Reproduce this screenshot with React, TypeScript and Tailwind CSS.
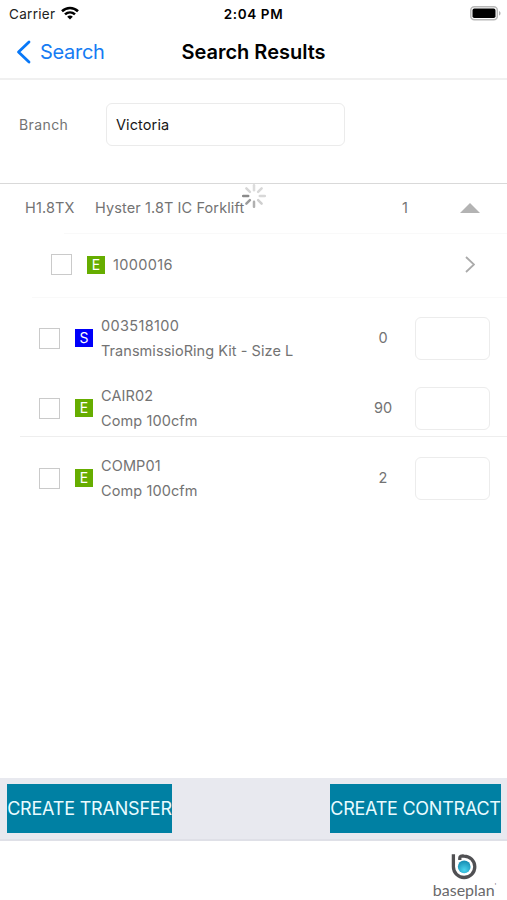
import React from "react";

type Kind = "E" | "S";

function Badge({ kind }: { kind: Kind }) {
  return (
    <span
      className={`flex h-[18px] w-[18px] shrink-0 items-center justify-center text-[14px] leading-none text-white ${
        kind === "E" ? "bg-[#66ad00]" : "bg-[#0000fa]"
      }`}
    >
      {kind}
    </span>
  );
}

function Checkbox() {
  return (
    <span
      role="checkbox"
      aria-checked="false"
      className="h-[21px] w-[21px] shrink-0 border-[1.5px] border-[#cacaca] bg-white"
    />
  );
}

function Spinner() {
  const shades = ["#dcdcdc", "#d8d8d8", "#d8d8d8", "#cfcfcf", "#b0b0b0", "#9c9c9c", "#8a8a8a", "#d6d6d6"];
  return (
    <svg viewBox="-12 -12 24 24" className="h-6 w-6">
      {shades.map((shade, i) => (
        <line
          key={i}
          x1="0"
          y1="-5.8"
          x2="0"
          y2="-10.8"
          stroke={shade}
          strokeWidth="2.5"
          strokeLinecap="round"
          transform={`rotate(${i * 45})`}
        />
      ))}
    </svg>
  );
}

function PartRow({ code, name, kind, qty }: { code: string; name: string; kind: Kind; qty: string }) {
  return (
    <div className="flex h-full items-center pl-[39px]">
      <Checkbox />
      <div className="ml-[15px]">
        <Badge kind={kind} />
      </div>
      <div className="ml-2 flex-1 text-[14.5px] leading-[25px] tracking-[0.1px]">
        <div className={kind === "S" ? "tracking-[0.35px]" : ""}>{code}</div>
        <div className={kind === "S" ? "tracking-[0.05px]" : ""}>{name}</div>
      </div>
      <div className="w-10 text-center text-[14.5px]">{qty}</div>
      <div className="ml-3 mr-[17px] h-[43px] w-[75px] rounded-md border border-[#ececec] bg-white" />
    </div>
  );
}

export default function App() {
  return (
    <div className="flex h-[900px] w-[507px] flex-col overflow-hidden bg-white font-[Inter,sans-serif] text-[#737373]">
      <header className="h-20 shrink-0 border-b-2 border-[#f0f0f0] text-black">
        <div className="grid h-7 grid-cols-3 items-center">
          <div className="flex items-center pl-[9px] text-[13.5px] text-[#222]">
            <span className="tracking-[0.3px]">Carrier</span>
            <svg viewBox="0 0 18 14" className="mb-[2px] ml-[6px] h-[14px] w-[18px]" fill="none" stroke="#000" strokeWidth="2.6">
              <path d="M1 5.2C5.6.9 12.4.9 17 5.2" />
              <path d="M4 8.4c2.9-2.6 7.1-2.6 10 0" />
              <path d="M6.2 10.7c1.6-1.5 4-1.5 5.6 0L9 13.5z" fill="#000" stroke="none" />
            </svg>
          </div>
          <div className="text-center text-[13.5px] font-semibold tracking-[0.6px]">2:04 PM</div>
          <div className="flex justify-end pb-[2px] pr-[6px]">
            <svg viewBox="0 0 31 15" className="h-[15px] w-[31px]">
              <rect x=".8" y=".8" width="26.5" height="13" rx="3.5" fill="#fff" stroke="#b8b8b8" strokeWidth="1.5" />
              <rect x="2.5" y="2.6" width="23" height="9.4" rx="1.8" fill="#000" />
              <path d="M29 5c2 .8 2 3.8 0 4.6z" fill="#b0b0b0" />
            </svg>
          </div>
        </div>
        <div className="grid h-12 grid-cols-[150px_1fr_150px] items-center">
          <div className="flex items-center pl-4 text-[20px] text-[#167cf3]">
            <svg viewBox="0 0 16 24" className="mr-2 h-6 w-4" fill="none" stroke="#0878f8" strokeWidth="2.8" strokeLinecap="round" strokeLinejoin="round">
              <path d="M13 2 2.5 12 13 22" />
            </svg>
            <span className="whitespace-nowrap tracking-[-0.3px]">Search</span>
          </div>
          <h1 className="whitespace-nowrap text-center text-[20px] font-semibold">Search Results</h1>
        </div>
      </header>

      <section className="h-[104px] shrink-0 border-b border-[#d9d9d9] pt-[23px]">
        <div className="flex items-center pl-[19px]">
          <span className="w-[87px] text-[14px] tracking-[0.4px]">Branch</span>
          <div className="flex h-[43px] w-[239px] items-center rounded-md border border-[#ebebeb] pl-[9px] text-[14.5px] tracking-[0.1px] text-[#171717]">
            Victoria
          </div>
        </div>
      </section>

      <main className="flex-1">
        <div className="relative flex h-[49px] items-center pb-[2px] pl-[25px] text-[14.5px]">
          <span className="w-[70px] tracking-[0.15px]">H1.8TX</span>
          <span className="w-[290px] tracking-[0.1px]">Hyster 1.8T IC Forklift</span>
          <span className="w-10 text-center">1</span>
          <svg viewBox="0 0 20 10" className="ml-[35px] h-[10px] w-5" fill="#b3b3b3">
            <path d="M0 10 10 0 20 10z" />
          </svg>
          <div className="absolute left-[242px] top-0">
            <Spinner />
          </div>
        </div>
        <div className="ml-16 h-px bg-[#f9f9f9]" />
        <div className="flex h-[63px] items-center pb-[2px] pl-[51px]">
          <Checkbox />
          <div className="ml-[15px]">
            <Badge kind="E" />
          </div>
          <span className="ml-2 w-[352px] text-[14.5px] tracking-[0.35px]">1000016</span>
          <svg viewBox="0 0 10 17" className="h-[17px] w-[10px]" fill="none" stroke="#aaa" strokeWidth="1.8">
            <path d="M1 1l8 7.5L1 16" />
          </svg>
        </div>
        <div className="ml-8 h-px bg-[#f9f9f9]" />
        <div className="mt-[5px] h-[70px]">
          <PartRow code="003518100" name="TransmissioRing Kit - Size L" kind="S" qty="0" />
        </div>
        <div className="h-[70px]">
          <PartRow code="CAIR02" name="Comp 100cfm" kind="E" qty="90" />
        </div>
        <div className="relative h-[70px]">
          <div className="absolute left-5 right-0 top-[-7px] h-px bg-[#eeeeee]" />
          <PartRow code="COMP01" name="Comp 100cfm" kind="E" qty="2" />
        </div>
      </main>

      <div className="flex h-[63px] shrink-0 items-start justify-between border-b-2 border-[#dfe0e7] bg-[#e8e9ef] pl-[7px] pr-[6px] pt-[6px] text-[18px] text-[#e9fbff]">
        <button className="flex h-[49px] w-[165px] items-center justify-center whitespace-nowrap bg-[#0080a3] tracking-[-0.2px]">
          CREATE TRANSFER
        </button>
        <button className="flex h-[49px] w-[171px] items-center justify-center whitespace-nowrap bg-[#0080a3] tracking-[-0.25px]">
          CREATE CONTRACT
        </button>
      </div>

      <footer className="flex h-[59px] shrink-0 justify-end pr-[10px] pt-3">
        <div className="flex w-[65px] flex-col items-center">
          <svg viewBox="0 0 28 28" className="mr-[2px] h-[28px] w-[28px] shrink-0" fill="none">
            <defs>
              <radialGradient id="orb" cx=".5" cy=".75" r=".7">
                <stop offset="0" stopColor="#4ad3ee" />
                <stop offset="1" stopColor="#168fb5" />
              </radialGradient>
            </defs>
            <path d="M3.4 1.2v12.6A10.7 10.7 0 1 0 14 3.1Q9.8 2.6 9.8 5v2" stroke="#505053" strokeWidth="3.3" strokeLinejoin="round" />
            <circle cx="14.2" cy="13.8" r="6.4" fill="url(#orb)" />
          </svg>
          <div className="flex whitespace-nowrap font-[Lato,sans-serif] text-[16px] leading-[18px] text-[#69696b]">
            <span>baseplan</span>
            <span className="text-[7px] leading-[10px]">'</span>
          </div>
        </div>
      </footer>
    </div>
  );
}
